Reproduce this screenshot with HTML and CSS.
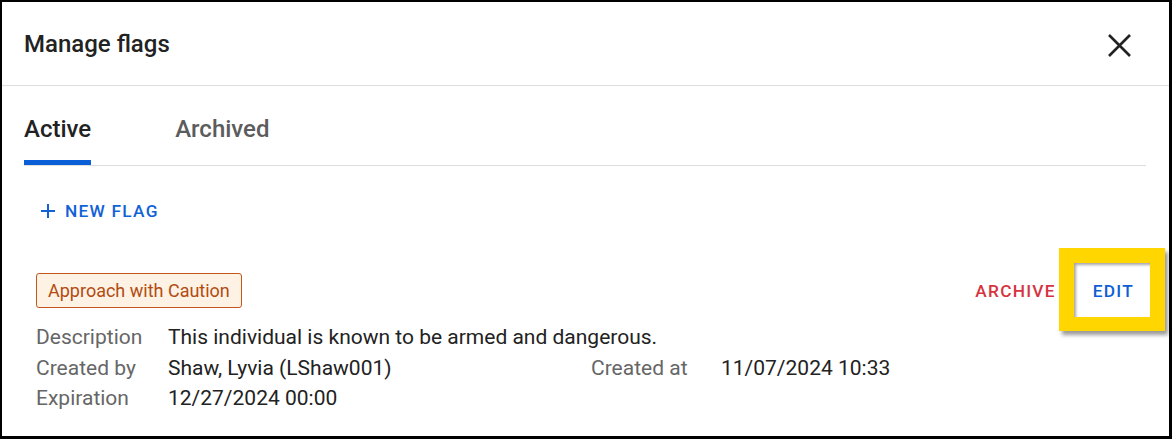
FILE: index.html
```html
<!DOCTYPE html>
<html>
  <head>
    <meta charset="utf-8">
    <title>Manage flags</title>
    <link rel="stylesheet" href="styles.css">
  </head>
  <body>
    <div class="dialog">
      <div class="dialog-header">
        <h2 class="dialog-title">Manage flags</h2>
        <button class="close-btn" type="button" aria-label="Close">
          <svg width="24" height="24" viewBox="0 0 24 24">
            <path d="M2 2L23 23M23 2L2 23" stroke="#222" stroke-width="2.6" fill="none"/>
          </svg>
        </button>
      </div>

      <div class="tabs">
        <div class="tab active">Active</div>
        <div class="tab">Archived</div>
      </div>

      <div class="new-flag">
        <svg width="24" height="24" viewBox="0 0 24 24">
          <path d="M19 13h-6v6h-2v-6H5v-2h6V5h2v6h6v2z" fill="#1262d6"/>
        </svg>
        <span>NEW FLAG</span>
      </div>

      <div class="flag">
        <div class="flag-top">
          <span class="chip">Approach with Caution</span>
          <div class="flag-actions">
            <button type="button" class="text-btn archive">ARCHIVE</button>
            <button type="button" class="text-btn edit">EDIT<span class="highlight"></span></button>
          </div>
        </div>
        <div class="flag-details">
          <div class="label">Description</div>
          <div class="value wide">This individual is known to be armed and dangerous.</div>
          <div class="label">Created by</div>
          <div class="value">Shaw, Lyvia (LShaw001)</div>
          <div class="label">Created at</div>
          <div class="value">11/07/2024 10:33</div>
          <div class="label">Expiration</div>
          <div class="value">12/27/2024 00:00</div>
        </div>
      </div>
    </div>
  </body>
</html>
```

FILE: styles.css
```css
* {
  box-sizing: border-box;
}
body {
  margin: 0;
  font-family: Roboto, "Noto Sans", sans-serif;
  background: #fff;
}
button {
  font-family: inherit;
  background: none;
  border: 0;
  padding: 0;
  cursor: pointer;
}
.dialog {
  width: 1172px;
  height: 439px;
  border-style: solid;
  border-color: #000;
  border-width: 2px 3px 3px 2px;
  overflow: hidden;
}
.dialog-header {
  height: 84px;
  display: flex;
  align-items: center;
  justify-content: space-between;
  padding: 0 38px 0 22px;
  border-bottom: 1px solid #dedede;
}
.dialog-title {
  margin: 0;
  font-size: 24px;
  font-weight: 500;
  color: #222;
}
.close-btn {
  width: 24px;
  height: 24px;
  display: flex;
  margin-top: 2px;
}
.tabs {
  display: flex;
  gap: 84px;
  margin: 27px 23px 0 22px;
  border-bottom: 1px solid #dedede;
}
.tab {
  font-size: 24px;
  font-weight: 500;
  line-height: 32px;
  padding-bottom: 15px;
  color: #5c5c5c;
  border-bottom: 5px solid transparent;
}
.tab.active {
  color: #222;
  border-bottom-color: #0a5fd6;
}
.new-flag {
  display: flex;
  align-items: center;
  gap: 5px;
  margin: 33px 0 0 34px;
  color: #1262d6;
  font-size: 17.3px;
  font-weight: 500;
  letter-spacing: 1.25px;
  line-height: 24px;
}
.flag {
  margin: 50px 35px 0 34px;
}
.flag-top {
  display: flex;
  align-items: center;
  justify-content: space-between;
}
.chip {
  font-size: 18px;
  line-height: 25px;
  padding: 4px 11px;
  color: #b24c12;
  background: #fdf2e3;
  border: 1px solid #c3571b;
  border-radius: 3px;
}
.flag-actions {
  display: flex;
  gap: 37px;
}
.text-btn {
  font-size: 17.3px;
  font-weight: 500;
  letter-spacing: 1.25px;
  line-height: 24px;
}
.archive {
  color: #d5343f;
}
.edit {
  color: #0d5fd4;
  position: relative;
}
.highlight {
  position: absolute;
  left: -34px;
  top: -31px;
  width: 106px;
  height: 83px;
  border: 15px solid #ffd600;
  border-bottom-width: 14px;
  box-shadow: 3px 4px 4px rgba(0, 0, 0, 0.4), inset 2px 2px 3px rgba(0, 0, 0, 0.35);
  pointer-events: none;
}
.flag-details {
  display: grid;
  grid-template-columns: 132px 423px 130px auto;
  margin-top: 14px;
  font-size: 21px;
  line-height: 30.5px;
}
.label {
  color: #666;
}
.value {
  color: #222;
}
.value.wide {
  grid-column: 2 / 5;
}
```
